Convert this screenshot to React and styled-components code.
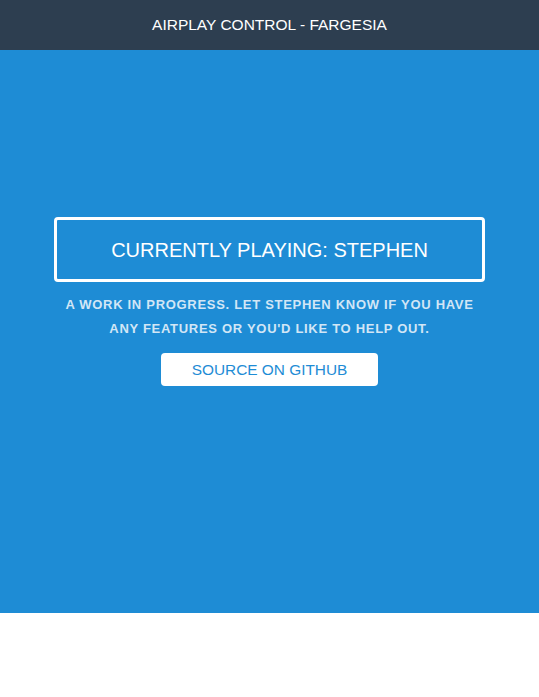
import React from "react";
import styled, { createGlobalStyle } from "styled-components";

const Global = createGlobalStyle`
  html, body { margin: 0; padding: 0; background: #fff; }
  body { font-family: "Liberation Sans", Arial, sans-serif; }
`;

const Header = styled.header`
  height: 50px;
  background: #2d3e50;
  color: #fff;
  display: flex;
  align-items: center;
  justify-content: center;
  font-size: 15.5px;
`;

const Hero = styled.main`
  height: 563px;
  background: #1e8cd5;
  box-sizing: border-box;
  padding-top: 167px;
  display: flex;
  flex-direction: column;
  align-items: center;
`;

const NowPlaying = styled.div`
  width: 80%;
  height: 65px;
  box-sizing: border-box;
  border: 3px solid #fff;
  border-radius: 4px;
  display: flex;
  align-items: center;
  justify-content: center;
  color: #fff;
  font-size: 20px;
  padding-top: 1px;
`;

const Note = styled.p`
  margin: 11px 0 0;
  width: 80%;
  text-align: center;
  color: #d2e6f6;
  font-weight: bold;
  font-size: 13px;
  line-height: 24px;
  letter-spacing: 0.7px;
`;

const SourceButton = styled.a`
  margin-top: 12px;
  width: 217px;
  height: 33px;
  background: #fff;
  border-radius: 4px;
  color: #1e8cd5;
  font-size: 15.4px;
  display: flex;
  align-items: center;
  justify-content: center;
  text-decoration: none;
`;

export default function App() {
  return (
    <>
      <Global />
      <Header>AIRPLAY CONTROL - FARGESIA</Header>
      <Hero>
        <NowPlaying>CURRENTLY PLAYING: STEPHEN</NowPlaying>
        <Note>
          A WORK IN PROGRESS. LET STEPHEN KNOW IF YOU HAVE
          <br />
          ANY FEATURES OR YOU'D LIKE TO HELP OUT.
        </Note>
        <SourceButton href="#">SOURCE ON GITHUB</SourceButton>
      </Hero>
    </>
  );
}
